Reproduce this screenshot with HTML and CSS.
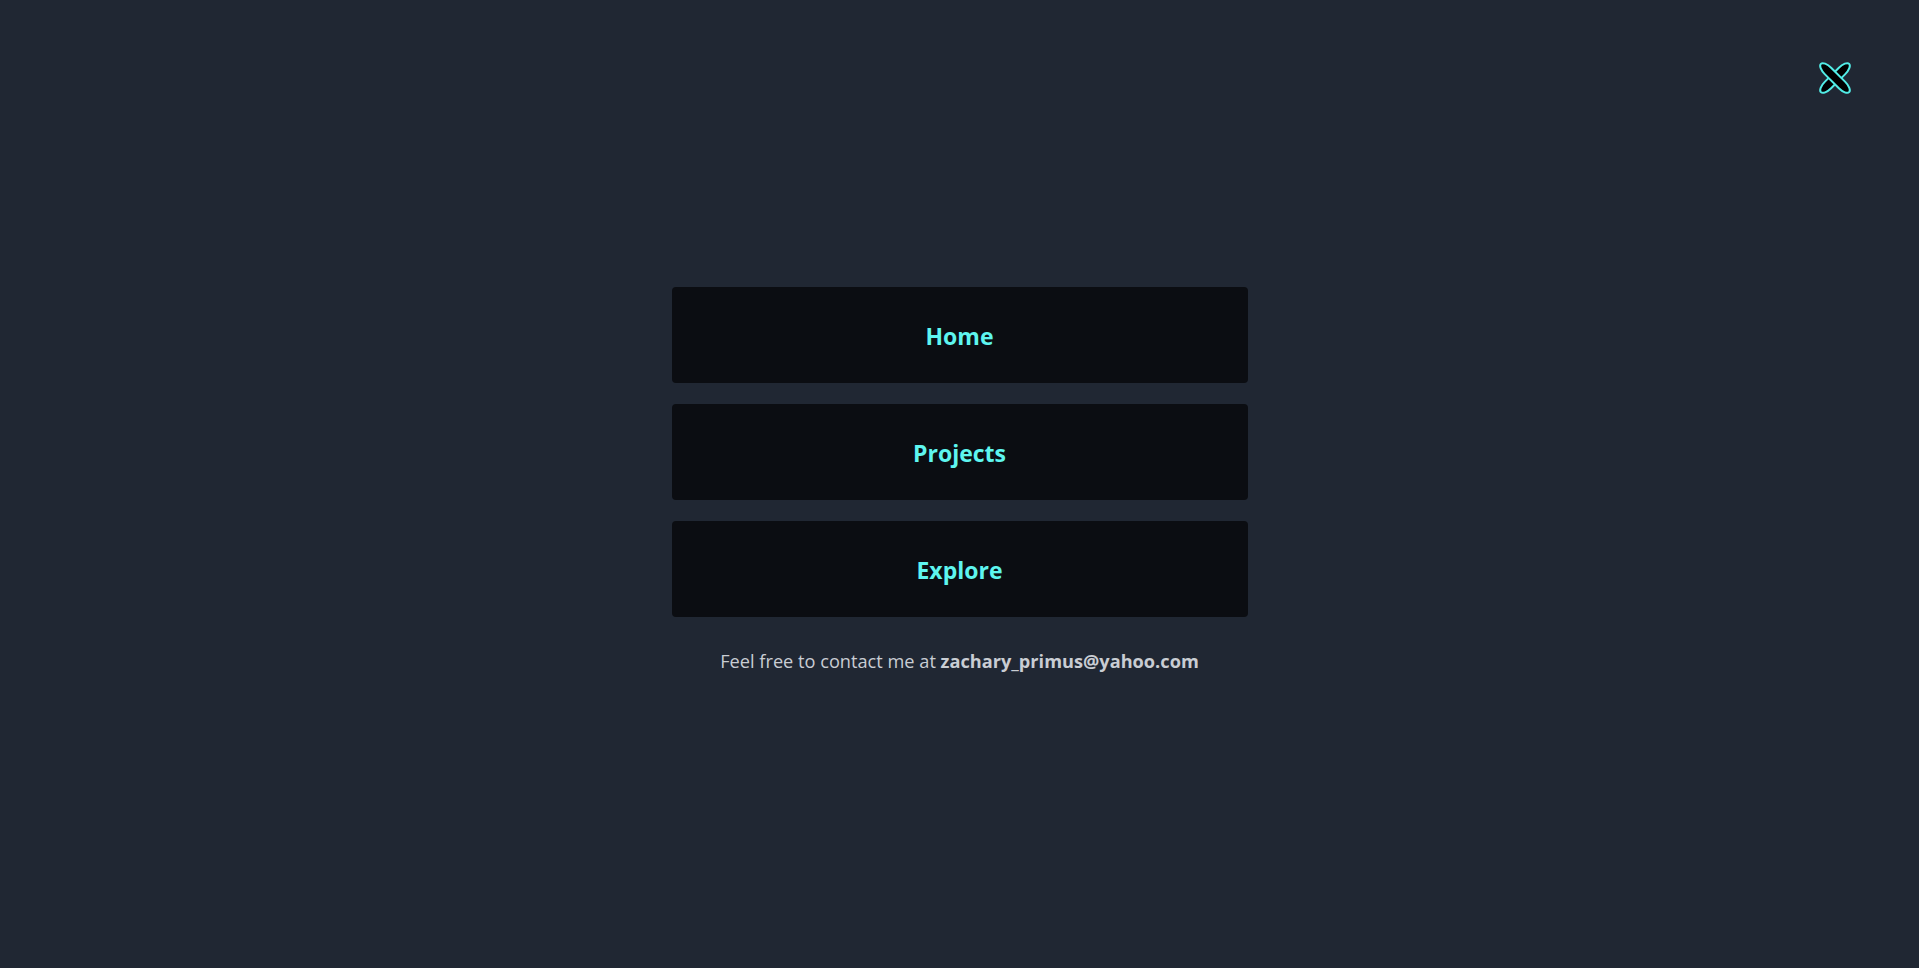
FILE: index.html
```html
<!DOCTYPE html>
<html lang="en">
<head>
<meta charset="utf-8">
<title>Menu</title>
<link rel="stylesheet" href="styles.css">
</head>
<body>
<div class="page">
  <header class="topbar">
    <button class="close" aria-label="Close menu">
      <svg width="40" height="40" viewBox="0 0 40 40">
        <rect x="15.5" y="0" width="9" height="40" rx="4.5" ry="10" transform="rotate(45 20 20)" class="bar"/>
        <rect x="15.5" y="0" width="9" height="40" rx="4.5" ry="10" transform="rotate(-45 20 20)" class="bar"/>
      </svg>
    </button>
  </header>
  <main class="menu">
    <nav class="links">
      <a class="link" href="#">Home</a>
      <a class="link" href="#">Projects</a>
      <a class="link" href="#">Explore</a>
    </nav>
    <p class="contact">Feel free to contact me at <strong>zachary_primus@yahoo.com</strong></p>
  </main>
</div>
</body>
</html>
```
FILE: styles.css
```css
* { box-sizing: border-box; }
html, body { margin: 0; padding: 0; }
body {
  background: #202733;
  font-family: "Open Sans", "Noto Sans", sans-serif;
  width: 1919px;
  height: 968px;
  overflow: hidden;
}
.page {
  display: flex;
  flex-direction: column;
  height: 100%;
}
.topbar {
  display: flex;
  justify-content: flex-end;
  padding: 58px 64px 0 0;
  height: 287px;
}
.close {
  background: none;
  border: 0;
  padding: 0;
  width: 40px;
  height: 40px;
  cursor: pointer;
}
.close svg { display: block; overflow: visible; }
.bar {
  fill: #000;
  stroke: #52ece6;
  stroke-width: 2;
}
.menu {
  display: flex;
  flex-direction: column;
  align-items: center;
}
.links {
  display: flex;
  flex-direction: column;
  gap: 21px;
  width: 576px;
}
.link {
  display: flex;
  align-items: center;
  justify-content: center;
  height: 96px;
  padding-top: 2px;
  background: #0b0d12;
  border-radius: 4px;
  color: #5ef5ef;
  font-weight: 700;
  font-size: 23px;
  text-decoration: none;
}
.contact {
  margin: 32px 0 0;
  color: #c9cdd3;
  font-size: 18.2px;
  line-height: 24px;
}
.contact strong { font-weight: 700; }
```
